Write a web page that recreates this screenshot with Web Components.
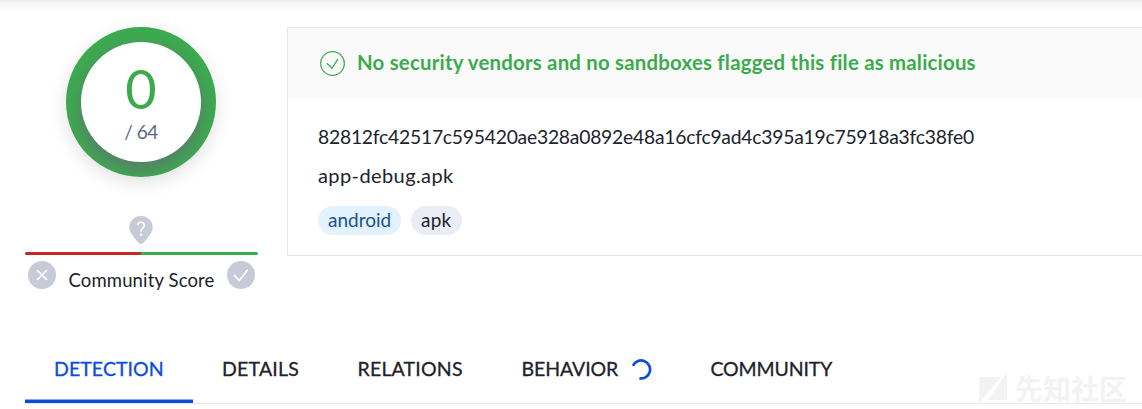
<!DOCTYPE html>
<html lang="en"><head><meta charset="utf-8"><title>File report</title>
<style>html,body{margin:0;background:#fff;overflow:hidden}body{font:19.5px/24px Lato,"Liberation Sans",sans-serif;color:#20222c}</style></head><body><report-page></report-page>
<script>
const define=(name,html)=>customElements.define(name,class extends HTMLElement{
  connectedCallback(){if(this.shadowRoot)return;const t=document.createElement('template');t.innerHTML=html;this.attachShadow({mode:'open'}).append(t.content.cloneNode(true))}
});
define('text-line',`<style>:host{display:block;white-space:nowrap}</style><slot></slot>`);
define('score-ring',`<style>
:host{display:block;width:150px;height:150px;border-radius:50%;box-shadow:0 5px 18px rgba(0,0,0,.12)}
.ring{box-sizing:border-box;width:150px;height:150px;padding:15px;border-radius:50%;background:#3cab4e;overflow:hidden}
.inner{height:120px;border-radius:50%;background:#fff;box-shadow:0 7px 18px rgba(105,95,125,.7);display:flex;flex-direction:column;align-items:center}
.n{font-size:54px;line-height:58px;margin-top:18px;color:#3cab4e}.t{font-size:19px;line-height:24px;color:#606880;margin-top:2px;letter-spacing:-.5px}
</style><div class="ring"><div class="inner"><div class="n">0</div><div class="t"><text-line>/ 64</text-line></div></div></div>`);
define('community-score',`<style>
:host{display:block;width:233px;margin-top:39px}
.pin{display:block;margin:0 auto 0 104px}
.bar{height:3px;margin-top:7px;border-radius:2px;background:linear-gradient(90deg,#c9252d 50%,#3cab4e 50%)}
.row{display:flex;justify-content:space-between;padding:6px 3px 0;align-items:flex-start}.row svg{display:block}
text-line{font-size:18.5px;margin-top:7px;width:146px;letter-spacing:.14px}
</style><svg class="pin" width="24" height="29" viewBox="0 0 24 29"><path d="M12 0C5.400 0 .3 4.900.3 11.300c0 5.400 3.700 8.500 8.700 15 1.800 2.400 4.200 2.400 6 0 5-6.500 8.700-9.600 8.700-15C23.700 4.900 18.600 0 12 0Z" fill="#c8cbd7"/><path d="M8.700 9.200C8.900 7.200 10.200 6.200 12 6.200c2 0 3.400 1.200 3.400 3.100 0 2.800-3.300 2.700-3.300 5.800v.8" fill="none" stroke="#fff" stroke-width="1.6"/><circle cx="12.100" cy="18.800" r="1.200" fill="#fff"/></svg>
<div class="bar"></div><div class="row"><svg width="28" height="28"><circle cx="14" cy="14" r="14" fill="#c8cbd7"/><path d="m9 9 10 10M19 9 9 19" stroke="#fff" stroke-width="1.700"/></svg><text-line>Community Score</text-line><svg width="28" height="28"><circle cx="14" cy="14" r="14" fill="#c8cbd7"/><path d="m7 14 5.300 5.500L20.700 8.700" fill="none" stroke="#fff" stroke-width="1.700"/></svg></div>`);
define('tag-chip',`<style>:host{display:block;box-sizing:border-box;width:51px;height:29px;padding:2px 10px;border-radius:15px;background:#ebedf6;font-size:19px;letter-spacing:.2px}:host([blue]){width:83px;background:#e2f2ff;color:#21518c;letter-spacing:0}</style><slot></slot>`);
define('verdict-card',`<style>
:host{display:block;flex:1;box-sizing:border-box;height:229px;border:1px solid #e6e7ed;border-right:0}
header{height:70px;background:#fafafa;display:flex;align-items:center;gap:12px;padding-left:32px;color:#3cab4e}
header text-line{font-size:20.4px;font-weight:700;letter-spacing:.208px;margin-top:-3px}svg{display:block}
.hash{font-size:19.3px;letter-spacing:-.22px}.name{font-size:20px;letter-spacing:.41px;margin-top:-1px}
.b{padding:27px 0 0 30px;display:flex;flex-direction:column;gap:15px}.tags{display:flex;gap:10px;margin-top:4px}
</style><header><svg width="25" height="25"><circle cx="12.500" cy="12.500" r="11.800" fill="none" stroke="#3cab4e" stroke-width="1.300"/><path d="m6.800 12.300 5.200 5 6-9.500" fill="none" stroke="#3cab4e" stroke-width="1.300"/></svg><text-line>No security vendors and no sandboxes flagged this file as malicious</text-line></header>
<div class="b"><text-line class="hash">82812fc42517c595420ae328a0892e48a16cfc9ad4c395a19c75918a3fc38fe0</text-line><text-line class="name">app-debug.apk</text-line><div class="tags"><tag-chip blue>android</tag-chip><tag-chip>apk</tag-chip></div></div>`);
define('nav-tab',`<style>:host{display:flex;box-sizing:border-box;height:69px;padding:22px 0 0 29px;gap:13px;-webkit-text-stroke:.3px currentColor}:host([active]){color:#0b4dda;box-shadow:inset 0 -3px #0b4dda,inset 0 -4px #8aa9ee}</style><slot></slot>`);
define('report-tabs',`<style>:host{display:block;margin-left:25px;margin-top:43px}.tabs{display:flex;height:69px;background:linear-gradient(#e6e7f0,#e6e7f0) bottom/100% 1px no-repeat}nav-tab{flex:none}svg{margin-top:1px}
.a{width:168px;height:68px;letter-spacing:.08px}.b{width:135.5px;letter-spacing:.23px}.c{width:164px;letter-spacing:.2px}.d{width:189px;letter-spacing:-.09px}.e{letter-spacing:-.13px}</style><div class="tabs"><nav-tab class="a" active><text-line>DETECTION</text-line></nav-tab><nav-tab class="b"><text-line>DETAILS</text-line></nav-tab><nav-tab class="c"><text-line>RELATIONS</text-line></nav-tab><nav-tab class="d"><text-line>BEHAVIOR</text-line><svg width="21" height="23"><path d="M1.900 7.700A9 9 0 1 1 8.400 20.300" fill="none" stroke="#0b4dda" stroke-width="2.700"/></svg></nav-tab><nav-tab class="e"><text-line>COMMUNITY</text-line></nav-tab></div>`);
define('water-mark',`<style>:host{position:absolute;left:979px;top:372px;display:flex;color:#f3f3f4;gap:7px;font:bold 28px/32px "Noto Sans CJK SC",sans-serif}</style><svg width="29" height="34"><path d="M0 5h22L0 31ZM28 0v28H9Z" fill="currentColor"/></svg><span>先知社区</span>`);
define('report-page',`<style>:host{display:block;height:409px;position:relative;background:linear-gradient(#ededed,#f7f7f7 4px,#fff 12px)}
.top{display:flex;padding-top:27px;align-items:flex-start}.side{width:233px;margin:0 29px 0 25px;height:265px}.side score-ring{margin-left:41px}</style><div class="top"><div class="side"><score-ring></score-ring><community-score></community-score></div><verdict-card></verdict-card></div><report-tabs></report-tabs><water-mark></water-mark>`);
</script></body></html>
